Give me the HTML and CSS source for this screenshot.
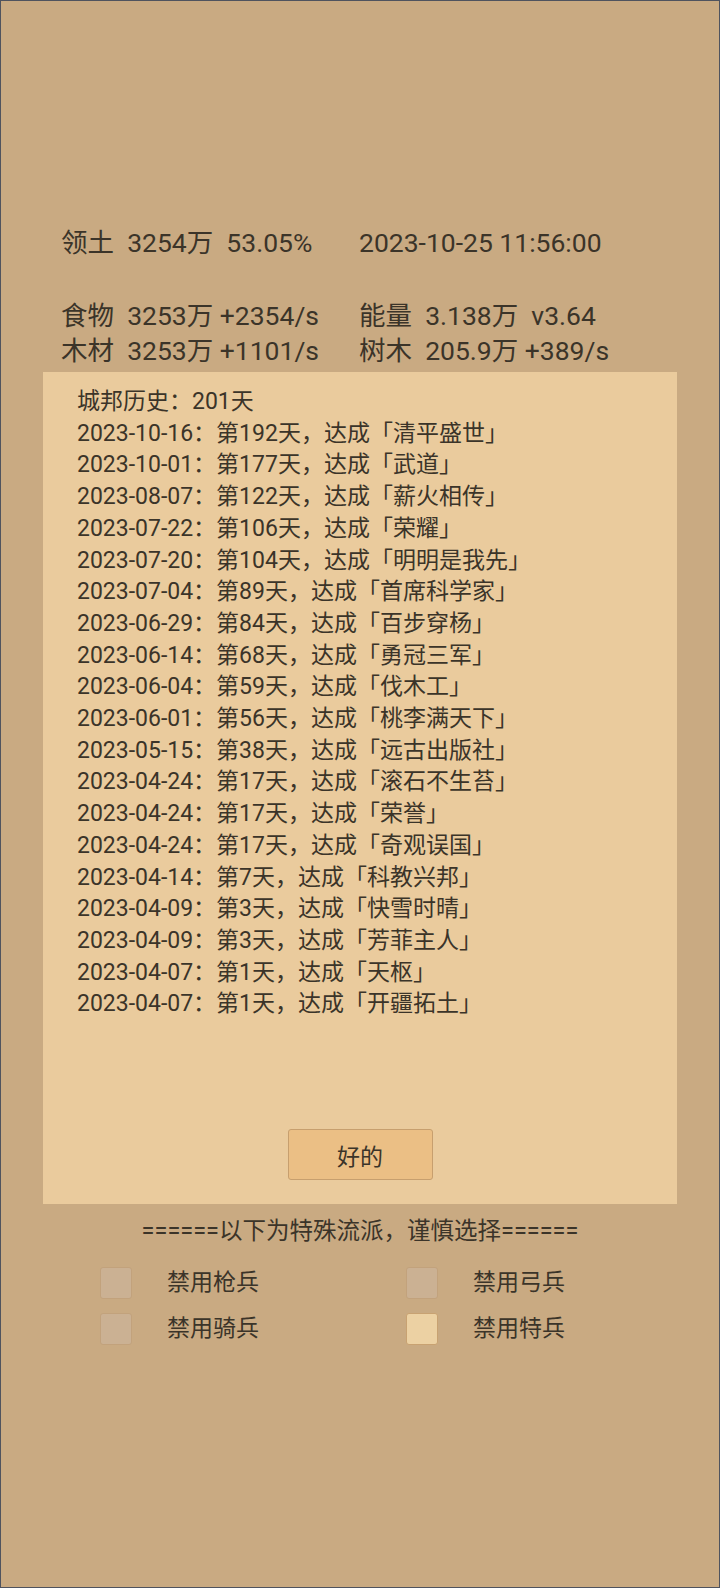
FILE: index.html
```html
<!DOCTYPE html>
<html lang="zh-CN">

<head>
    <meta charset="UTF-8">
    <meta name="viewport" content="width=device-width, initial-scale=1.0">
    <title>城邦</title>
    <link rel="stylesheet" href="styles.css">
</head>

<body>
    <div class="screen">
        <!-- Stats -->
        <div class="stats">
            <span>领土  3254万  53.05%</span>
            <span>2023-10-25 11:56:00</span>
            <span class="gap">食物  3253万 +2354/s</span>
            <span class="gap">能量  3.138万  v3.64</span>
            <span>木材  3253万 +1101/s</span>
            <span>树木  205.9万 +389/s</span>
        </div>

        <!-- History dialog -->
        <div class="dialog">
            <div class="history">
                <p>城邦历史：201天</p>
                <p>2023-10-16：第192天，达成「清平盛世」</p>
                <p>2023-10-01：第177天，达成「武道」</p>
                <p>2023-08-07：第122天，达成「薪火相传」</p>
                <p>2023-07-22：第106天，达成「荣耀」</p>
                <p>2023-07-20：第104天，达成「明明是我先」</p>
                <p>2023-07-04：第89天，达成「首席科学家」</p>
                <p>2023-06-29：第84天，达成「百步穿杨」</p>
                <p>2023-06-14：第68天，达成「勇冠三军」</p>
                <p>2023-06-04：第59天，达成「伐木工」</p>
                <p>2023-06-01：第56天，达成「桃李满天下」</p>
                <p>2023-05-15：第38天，达成「远古出版社」</p>
                <p>2023-04-24：第17天，达成「滚石不生苔」</p>
                <p>2023-04-24：第17天，达成「荣誉」</p>
                <p>2023-04-24：第17天，达成「奇观误国」</p>
                <p>2023-04-14：第7天，达成「科教兴邦」</p>
                <p>2023-04-09：第3天，达成「快雪时晴」</p>
                <p>2023-04-09：第3天，达成「芳菲主人」</p>
                <p>2023-04-07：第1天，达成「天枢」</p>
                <p>2023-04-07：第1天，达成「开疆拓土」</p>
            </div>
            <button class="ok">好的</button>
        </div>

        <!-- Options -->
        <p class="divider">======以下为特殊流派，谨慎选择======</p>
        <div class="options">
            <label class="option"><span class="box"></span>禁用枪兵</label>
            <label class="option"><span class="box"></span>禁用弓兵</label>
            <label class="option"><span class="box"></span>禁用骑兵</label>
            <label class="option"><span class="box checked"></span>禁用特兵</label>
        </div>
    </div>
</body>

</html>
```

FILE: styles.css
```css
body {
    margin: 0;
    font-family: Roboto, "Noto Sans CJK SC", sans-serif;
    color: #3b3429;
}

.screen {
    height: 1588px;
    box-sizing: border-box;
    border: 1px solid #4f535e;
    background-color: #c9aa82;
    padding-top: 224px;
}

.stats {
    display: grid;
    grid-template-columns: 298px auto;
    padding-left: 60px;
    font-size: 26.5px;
    line-height: 35px;
    white-space: pre;
}

.stats .gap {
    margin-top: 38px;
}

.dialog {
    display: flex;
    flex-direction: column;
    height: 832px;
    box-sizing: border-box;
    margin: 4px 42px 0;
    padding: 14px 34px 24px;
    background-color: #eacb9d;
}

.history p {
    margin: 0;
    font-size: 23px;
    line-height: 31.7px;
}

.ok {
    margin: auto auto 0;
    width: 145px;
    height: 51px;
    border: 1px solid #c79f6e;
    border-radius: 3px;
    background-color: #ebbf85;
    font-family: inherit;
    font-size: 23px;
    color: #3b3429;
}

.divider {
    margin: 11px 0 0;
    text-align: center;
    font-size: 23.5px;
    line-height: 32px;
}

.options {
    display: grid;
    grid-template-columns: 306px auto;
    row-gap: 14px;
    margin-top: 20px;
    padding-left: 99px;
}

.option {
    display: flex;
    align-items: center;
    gap: 35px;
    height: 32px;
    font-size: 23px;
    line-height: 32px;
}

.box {
    width: 32px;
    height: 32px;
    box-sizing: border-box;
    border: 1px solid #c2a27c;
    border-radius: 3px;
    background-color: #cbb193;
}

.box.checked {
    border-color: #c8a272;
    background-color: #ecd1a3;
}
```
